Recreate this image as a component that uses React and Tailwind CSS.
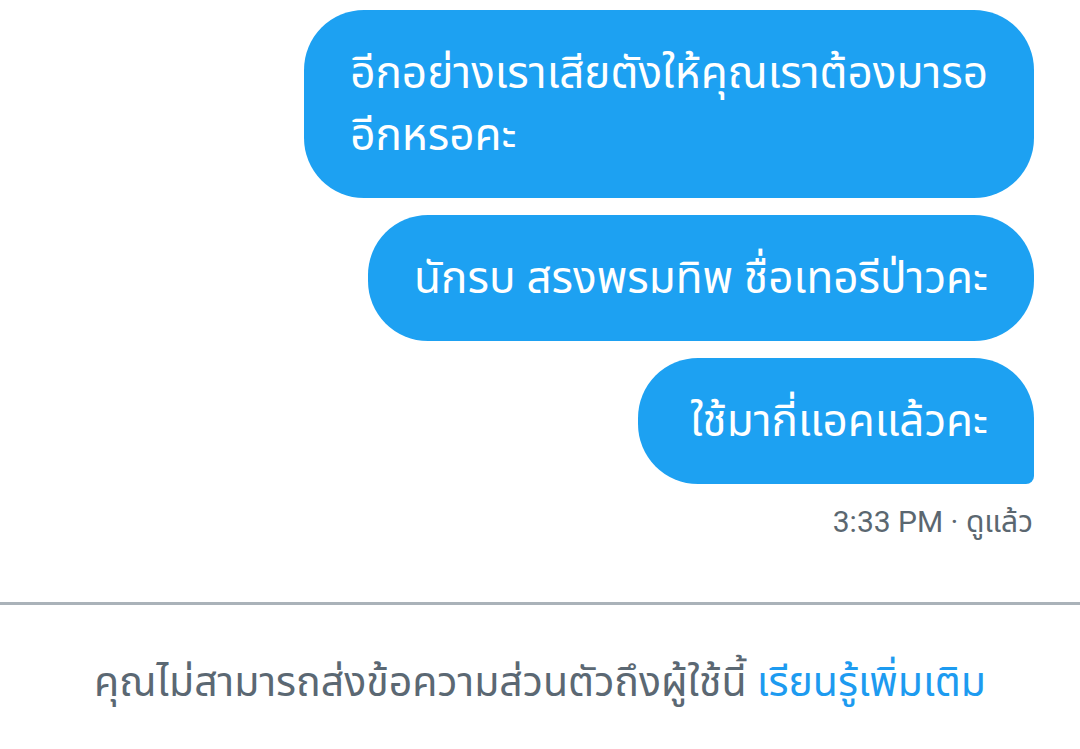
import React from "react";

const messages = [
  { id: 1, text: "อีกอย่างเราเสียตังให้คุณเราต้องมารอ\nอีกหรอคะ" },
  { id: 2, text: "นักรบ สรงพรมทิพ ชื่อเทอรีป่าวคะ" },
  { id: 3, text: "ใช้มากี่แอคแล้วคะ", last: true },
];

function Bubble({ text, last }) {
  return (
    <div
      className={`whitespace-pre-line bg-[#1da1f2] text-white text-[44px] leading-[62px] px-[46px] py-[32px] rounded-[60px] ${
        last ? "rounded-br-[8px] pl-[52px]" : ""
      }`}
    >
      {text}
    </div>
  );
}

export default function App() {
  return (
    <div
      className="w-[1080px] h-[749px] bg-white overflow-hidden flex flex-col"
      style={{ fontFamily: 'Roboto, "Noto Sans Thai", "Noto Sans", sans-serif' }}
    >
      <div className="flex flex-col items-end gap-[17px] pt-[10px] pr-[46px]">
        {messages.map((m) => (
          <Bubble key={m.id} text={m.text} last={m.last} />
        ))}
      </div>
      <div className="flex justify-end pr-[47px] mt-[20px] text-[30px] leading-[36px] text-[#5b6770]">
        3:33 PM · ดูแล้ว
      </div>

      <div className="mt-[62px] h-[3px] bg-[#aab2b9]" />

      <div className="flex justify-center mt-[52px] text-[41px] leading-[50px] text-[#5b6873]">
        <span>
          คุณไม่สามารถส่งข้อความส่วนตัวถึงผู้ใช้นี้{" "}
          <span className="text-[#1d9bf0]">เรียนรู้เพิ่มเติม</span>
        </span>
      </div>
    </div>
  );
}
